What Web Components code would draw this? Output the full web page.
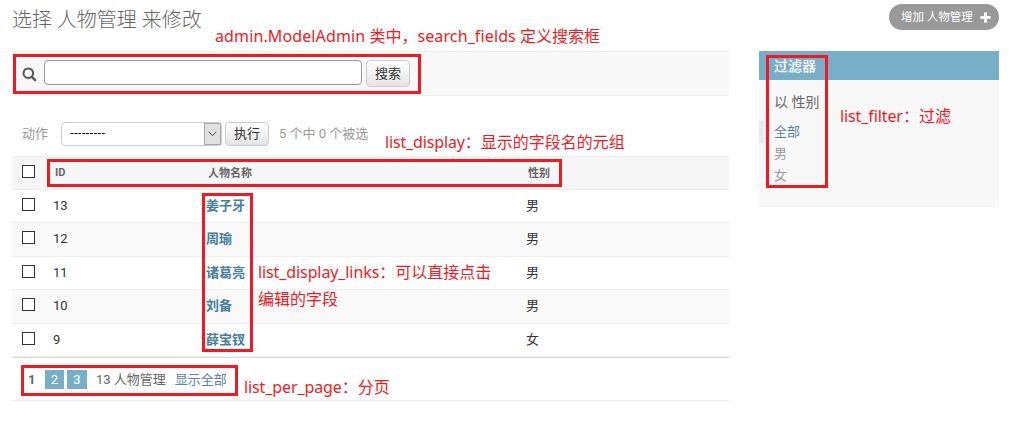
<!DOCTYPE html>
<html lang="zh-CN">
<head>
<meta charset="utf-8">
<title>人物管理</title>
<style>
  body {
    margin: 0;
    background: #fff;
    color: #333;
    font: 13px/20px Roboto, "Noto Sans CJK SC", sans-serif;
  }
</style>
</head>
<body>
<admin-page>
  <span slot="title">选择 人物管理 来修改</span>
  <add-link slot="tools">增加 人物管理</add-link>
  <search-bar button="搜索"></search-bar>
  <action-bar label="动作" button="执行">5 个中 0 个被选</action-bar>
  <result-list></result-list>
  <page-links>13 人物管理</page-links>
  <filter-panel slot="side" heading="过滤器" by="以 性别" options="全部,男,女"></filter-panel>

  <note-box slot="notes" style="left:13px;top:54px;width:408px;height:40px"></note-box>
  <note-box slot="notes" style="left:47px;top:159px;width:515px;height:28px"></note-box>
  <note-box slot="notes" style="left:202px;top:193px;width:51px;height:159px"></note-box>
  <note-box slot="notes" style="left:21px;top:365px;width:217px;height:31px"></note-box>
  <note-box slot="notes" style="left:766px;top:55px;width:62px;height:133px"></note-box>

  <note-text slot="notes" style="left:215px;top:23px;--track:.12px"><i>admin.ModelAdmin</i> 类中，<i>search_fields</i> 定义搜索框</note-text>
  <note-text slot="notes" style="left:385px;top:129px"><i>list_display</i>：显示的字段名的元组</note-text>
  <note-text slot="notes" style="left:258px;top:259px;--track:-.1px"><i>list_display_links</i>：可以直接点击<br>编辑的字段</note-text>
  <note-text slot="notes" style="left:244px;top:374px;--track:-.1px"><i>list_per_page</i>：分页</note-text>
  <note-text slot="notes" style="left:840px;top:103px;--track:-.1px"><i>list_filter</i>：过滤</note-text>
</admin-page>

<script>
// page frame: title row, main column, side column, notes on top
class AdminPage extends HTMLElement {
  constructor() {
    super();
    this.attachShadow({mode: 'open'}).innerHTML = `
    <style>
      :host {
        display: block;
        position: relative;
        box-sizing: border-box;
        height: 426px;
        padding: 0 14px 0 12px;
        overflow: hidden;
      }
      header {
        display: flex;
        justify-content: space-between;
        align-items: flex-start;
        height: 51px;
      }
      h1 {
        margin: 5px 0 0;
        font-size: 20px;
        line-height: 30px;
        font-weight: 300;
        color: #666;
      }
      .columns {
        display: grid;
        grid-template-columns: 717px 240px;
        column-gap: 30px;
        align-items: start;
      }
    </style>
    <header>
      <h1><slot name="title"></slot></h1>
      <slot name="tools"></slot>
    </header>
    <div class="columns">
      <main><slot></slot></main>
      <slot name="side"></slot>
    </div>
    <slot name="notes"></slot>
    `;
  }
}

class AddLink extends HTMLElement {
  constructor() {
    super();
    this.attachShadow({mode: 'open'}).innerHTML = `
    <style>
      :host {
        display: flex;
        align-items: center;
        justify-content: space-between;
        box-sizing: border-box;
        width: 110px;
        height: 26px;
        margin-top: 4px;
        padding: 0 8px 0 12px;
        border-radius: 13px;
        background: #999;
        color: #fff;
        font-size: 11.5px;
        white-space: nowrap;
      }
    </style>
    <span><slot></slot></span>
    <svg width="11" height="11" viewBox="0 0 11 11"><path d="M4 .5h3V4h3.500v3H7v3.500H4V7H.5V4H4z" fill="#fff"/></svg>
    `;
  }
}

// grey gradient push button
class PushButton extends HTMLElement {
  constructor() {
    super();
    this.attachShadow({mode: 'open'}).innerHTML = `
    <style>
      :host { display: block; }
      button {
        display: block;
        box-sizing: border-box;
        width: 44px;
        height: 100%;
        padding: 0;
        border: 1px solid #ccc;
        border-radius: 4px;
        background: linear-gradient(#fff, #e4e4e4);
        color: #333;
        font: inherit;
      }
    </style>
    <button><slot></slot></button>
    `;
  }
}

class SearchBar extends HTMLElement {
  constructor() {
    super();
    this.attachShadow({mode: 'open'}).innerHTML = `
    <style>
      :host {
        display: flex;
        align-items: flex-start;
        box-sizing: border-box;
        height: 45px;
        padding: 8px 10px;
        border-top: 1px solid #eee;
        border-bottom: 1px solid #eee;
        background: #f8f8f8;
      }
      svg { margin: 7px 7px 0 0; }
      input {
        box-sizing: border-box;
        width: 318px;
        height: 25px;
        margin: 0 4px 0 0;
        border: 1px solid #999;
        border-radius: 4px;
        background: #fff;
      }
      push-button { height: 27px; }
    </style>
    <svg width="15" height="15" viewBox="0 0 15 15" fill="none" stroke="#555">
      <circle cx="6.300" cy="6.200" r="4.800" stroke-width="2"/>
      <path d="M9.900 9.900l3.200 3.200" stroke-width="2.400" stroke-linecap="round"/>
    </svg>
    <input type="text">
    <push-button>${this.getAttribute('button')}</push-button>
    `;
  }
}

class ActionBar extends HTMLElement {
  constructor() {
    super();
    this.attachShadow({mode: 'open'}).innerHTML = `
    <style>
      :host {
        display: flex;
        align-items: center;
        height: 24px;
        padding: 26px 10px 10px;
        color: #999;
      }
      label { width: 39px; }
      .select {
        display: flex;
        justify-content: space-between;
        box-sizing: border-box;
        width: 161px;
        height: 24px;
        margin-right: 3px;
        padding-left: 8px;
        border: 1px solid #ccc;
        border-radius: 4px;
        background: #fff;
        color: #000;
        font-family: "Liberation Sans", sans-serif;
        font-size: 12px;
        line-height: 21px;
        letter-spacing: -.1px;
      }
      .arrow {
        box-sizing: border-box;
        width: 17px;
        height: 22px;
        border: 1px solid #aaa;
        background: #e1e1e1;
      }
      svg { display: block; margin: 7px 0 0 3px; }
      push-button { height: 24px; margin-right: 10px; }
    </style>
    <label>${this.getAttribute('label')}</label>
    <div class="select">---------<span class="arrow">
      <svg width="9" height="6" viewBox="0 0 9 6" fill="none" stroke="#444"><path d="M.7.8l3.800 3.800L8.300.8"/></svg>
    </span></div>
    <push-button>${this.getAttribute('button')}</push-button>
    <span><slot></slot></span>
    `;
  }
}

class ResultList extends HTMLElement {
  constructor() {
    super();
    const people = [
      [13, '姜子牙', '男'],
      [12, '周瑜', '男'],
      [11, '诸葛亮', '男'],
      [10, '刘备', '男'],
      [9, '薛宝钗', '女'],
    ];
    const rows = people.map(([id, name, sex]) => `
      <div class="row"><i></i><span>${id}</span><a>${name}</a><span>${sex}</span></div>`).join('');

    this.attachShadow({mode: 'open'}).innerHTML = `
    <style>
      :host { display: block; }
      .row {
        display: grid;
        grid-template-columns: 31px 153px 320px 1fr;
        box-sizing: border-box;
        height: 33px;
        padding: 5px 10px 0;
        border-bottom: 1px solid #eee;
        line-height: 21px;
      }
      .row:nth-of-type(odd) {
        height: 34px;
        background: #f9f9f9;
        line-height: 22px;
      }
      .row.head {
        height: 34px;
        padding-top: 6px;
        border-top: 1px solid #eee;
        background: #f6f6f6;
        color: #666;
        font-size: 11px;
        font-weight: 700;
        line-height: 20px;
      }
      .head span { padding-left: 2px; }
      .head span + span { padding-top: 1px; }
      i {
        box-sizing: border-box;
        width: 13px;
        height: 13px;
        margin-top: 3px;
        border: 1px solid #333;
        background: #fff;
      }
      .head i { margin-top: 2px; }
      a { color: #447e9b; font-weight: 700; }
    </style>
    <div class="row head"><i></i><span>ID</span><span>人物名称</span><span>性别</span></div>${rows}
    `;
  }
}

class PageLinks extends HTMLElement {
  constructor() {
    super();
    this.attachShadow({mode: 'open'}).innerHTML = `
    <style>
      :host {
        display: flex;
        align-items: center;
        box-sizing: border-box;
        height: 44px;
        padding: 1px 0 0 16px;
        border-top: 1px solid #ddd;
        border-bottom: 1px solid #eee;
        color: #666;
      }
      b { width: 17px; }
      .page {
        width: 19px;
        height: 19px;
        margin-right: 3px;
        background: #79aec8;
        color: #fff;
        line-height: 19px;
        text-align: center;
      }
      .page + .page { width: 20px; margin-right: 9px; }
      .all { margin-left: 9px; color: #5b80b2; }
    </style>
    <b>1</b><a class="page">2</a><a class="page">3</a>
    <span><slot></slot></span>
    <a class="all">显示全部</a>
    `;
  }
}

class FilterPanel extends HTMLElement {
  constructor() {
    super();
    const items = this.getAttribute('options').split(',')
      .map((o, i) => `<li${i ? '' : ' class="selected"'}>${o}</li>`).join('');

    this.attachShadow({mode: 'open'}).innerHTML = `
    <style>
      :host { display: block; height: 156px; background: #f8f8f8; }
      h2 {
        height: 29px;
        margin: 0;
        padding-left: 15px;
        background: #79aec8;
        color: #fff;
        font-size: 14px;
        font-weight: 500;
        line-height: 31px;
      }
      h3 {
        margin: 12px 0 9px;
        padding-left: 15px;
        color: #666;
        font-size: 14px;
        font-weight: 400;
        line-height: 20px;
      }
      ul { margin: 0; padding: 0; list-style: none; }
      li {
        height: 22px;
        padding-left: 10px;
        border-left: 5px solid transparent;
        color: #999;
        line-height: 22px;
      }
      .selected { border-color: #eaeaea; color: #5b80b2; }
    </style>
    <h2>${this.getAttribute('heading')}</h2>
    <h3>${this.getAttribute('by')}</h3>
    <ul>${items}</ul>
    `;
  }
}

// red frame drawn over a part of the page
class NoteBox extends HTMLElement {
  constructor() {
    super();
    this.attachShadow({mode: 'open'}).innerHTML = `
    <style>
      :host {
        position: absolute;
        box-sizing: border-box;
        border: 3px solid #ed1c24;
      }
    </style>
    `;
  }
}

// red caption, --track tunes the spacing of the latin part
class NoteText extends HTMLElement {
  constructor() {
    super();
    this.attachShadow({mode: 'open'}).innerHTML = `
    <style>
      :host {
        position: absolute;
        color: #ed1c24;
        font: 16px/27px "Noto Sans", "Noto Sans CJK SC", sans-serif;
        white-space: nowrap;
      }
      ::slotted(i) { font-style: normal; letter-spacing: var(--track, -.15px); }
    </style>
    <slot></slot>
    `;
  }
}

customElements.define('push-button', PushButton);
customElements.define('admin-page', AdminPage);
customElements.define('add-link', AddLink);
customElements.define('search-bar', SearchBar);
customElements.define('action-bar', ActionBar);
customElements.define('result-list', ResultList);
customElements.define('page-links', PageLinks);
customElements.define('filter-panel', FilterPanel);
customElements.define('note-box', NoteBox);
customElements.define('note-text', NoteText);
</script>
</body>
</html>
